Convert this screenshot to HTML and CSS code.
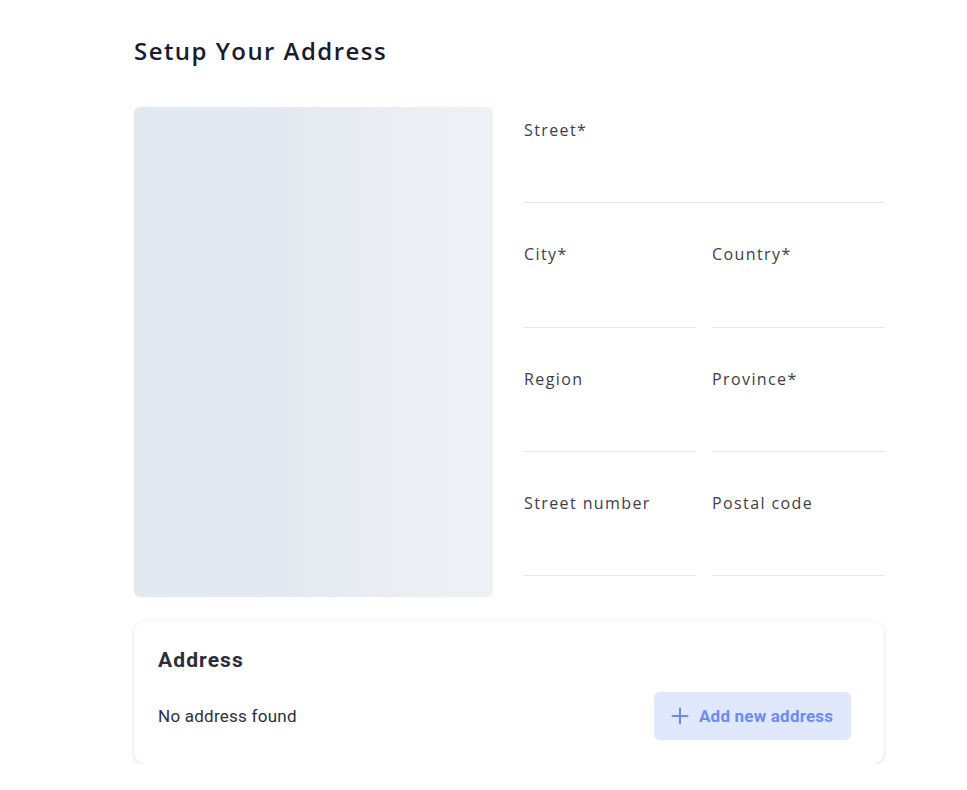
FILE: index.html
```html
<!DOCTYPE html>
<html>
<head>
<meta charset="utf-8">
<link rel="stylesheet" href="styles.css">
</head>
<body>
<div class="page">
  <h1 class="title">Setup Your Address</h1>
  <div class="top">
    <div class="map"></div>
    <div class="form">
      <div class="field full"><label>Street*</label><div class="input"></div></div>
      <div class="field"><label>City*</label><div class="input"></div></div>
      <div class="field"><label>Country*</label><div class="input"></div></div>
      <div class="field"><label>Region</label><div class="input"></div></div>
      <div class="field"><label>Province*</label><div class="input"></div></div>
      <div class="field"><label>Street number</label><div class="input"></div></div>
      <div class="field"><label>Postal code</label><div class="input"></div></div>
    </div>
  </div>
  <div class="card">
    <h2 class="card-title">Address</h2>
    <div class="card-row">
      <span class="empty">No address found</span>
      <button class="add-btn">
        <svg width="18" height="18" viewBox="0 0 18 18"><path d="M9 1.5v15M1.5 9h15" stroke="#6b8cf5" stroke-width="2" stroke-linecap="round" fill="none"/></svg>
        <span>Add new address</span>
      </button>
    </div>
  </div>
</div>
</body>
</html>
```
FILE: styles.css
```css
* { box-sizing: border-box; }
html, body { margin: 0; padding: 0; background: #fff; }
body { font-family: "Open Sans", "DejaVu Sans", sans-serif; }
.page { width: 750px; margin-left: 134px; padding-top: 35px; }
.title {
  margin: 0;
  font-size: 24px;
  font-weight: 600;
  color: #1b1b30;
  letter-spacing: 1.45px;
  line-height: 32px;
  height: 32px;
}
.top { display: flex; gap: 31px; margin-top: 40px; }
.map {
  width: 359px;
  height: 490px;
  border-radius: 6px;
  background: linear-gradient(90deg, #e2e8f0 0%, #e4e9f1 40%, #e8ecf2 60%, #ecf0f4 85%, #eef1f5 100%);
}
.form {
  flex: 1;
  display: grid;
  grid-template-columns: 1fr 1fr;
  column-gap: 16px;
}
.field { height: 124.3px; display: flex; flex-direction: column; padding-top: 12px; }
.field.full { grid-column: 1 / 3; }
.field label {
  font-size: 16px;
  color: #3d3d4e;
  letter-spacing: 1.4px;
  line-height: 22px;
}
.input { margin-top: auto; margin-bottom: 28px; border-bottom: 1px solid #e5e5e8; }
.card {
  margin-top: 17px;
  border-radius: 12px;
  background: #fff;
  box-shadow: 0 1px 4px rgba(0,0,0,0.14);
  padding: 26px 33px 24px 24px;
  font-family: Roboto, "Liberation Sans", sans-serif;
}
.card-title {
  margin: 0;
  font-size: 21px;
  font-weight: 700;
  color: #2c2c3a;
  letter-spacing: 1.1px;
  line-height: 26px;
}
.card-row {
  display: flex;
  justify-content: space-between;
  align-items: center;
  margin-top: 19px;
}
.empty { font-size: 17px; color: #2f2f3c; letter-spacing: 0.25px; }
.add-btn {
  display: flex;
  align-items: center;
  gap: 10px;
  height: 48px;
  width: 197px;
  padding: 0 17px;
  border: none;
  border-radius: 6px;
  background: #e0e8fd;
  color: #6b8cf5;
  font-family: Roboto, "Liberation Sans", sans-serif;
  font-size: 17px;
  font-weight: 700;
  letter-spacing: 0.2px;
  white-space: nowrap;
}
```
